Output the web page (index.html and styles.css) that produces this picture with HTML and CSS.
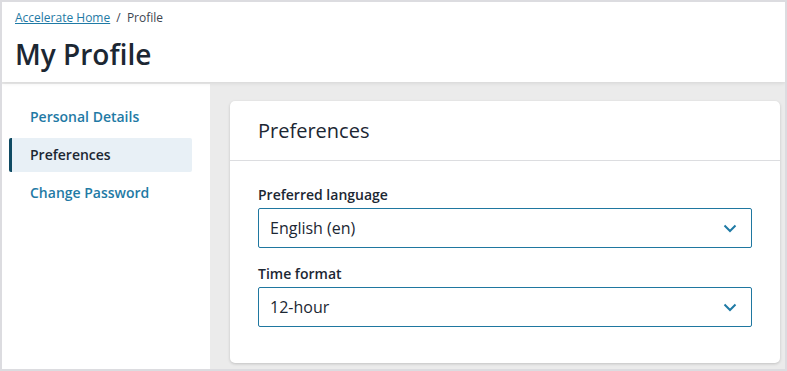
FILE: index.html
```html
<!DOCTYPE html>
<html lang="en">
<head>
<meta charset="utf-8">
<title>My Profile</title>
<link rel="stylesheet" href="styles.css">
</head>
<body>
<div class="frame">
  <header class="page-header">
    <nav class="breadcrumb">
      <a href="#" class="crumb-link">Accelerate Home</a>
      <span class="crumb-sep">/</span>
      <span class="crumb-current">Profile</span>
    </nav>
    <h1 class="page-title">My Profile</h1>
  </header>
  <div class="layout">
    <aside class="sidebar">
      <a href="#" class="side-item">Personal Details</a>
      <a href="#" class="side-item is-active">Preferences</a>
      <a href="#" class="side-item">Change Password</a>
    </aside>
    <main class="main">
      <section class="card">
        <div class="card-header">
          <h2 class="card-title">Preferences</h2>
        </div>
        <div class="card-body">
          <div class="field">
            <label class="field-label">Preferred language</label>
            <div class="select">
              <span class="select-value">English (en)</span>
              <svg class="chevron" width="14" height="9" viewBox="0 0 14 9"><path d="M1.5 1.5 L7 7 L12.5 1.5" fill="none" stroke="#1f7aa5" stroke-width="2"/></svg>
            </div>
          </div>
          <div class="field">
            <label class="field-label">Time format</label>
            <div class="select">
              <span class="select-value">12-hour</span>
              <svg class="chevron" width="14" height="9" viewBox="0 0 14 9"><path d="M1.5 1.5 L7 7 L12.5 1.5" fill="none" stroke="#1f7aa5" stroke-width="2"/></svg>
            </div>
          </div>
        </div>
      </section>
    </main>
  </div>
</div>
</body>
</html>
```

FILE: styles.css
```css
* { box-sizing: border-box; }
html, body { margin: 0; padding: 0; }
body {
  font-family: "Open Sans", "Noto Sans", sans-serif;
  color: #1c2733;
  background: #fff;
}
.frame {
  width: 787px;
  height: 371px;
  border: 2px solid #dcdce0;
  display: flex;
  flex-direction: column;
  overflow: hidden;
  background: #ebebeb;
}
.page-header {
  background: #fff;
  height: 80px;
  padding: 7px 13px 0;
  position: relative;
  z-index: 1;
  box-shadow: 0 1px 4px rgba(0,0,0,0.10);
  flex: none;
}
.breadcrumb {
  font-size: 12px;
  line-height: 17px;
  color: #3d4550;
}
.crumb-link {
  color: #1f7aa5;
  text-decoration: underline;
}
.crumb-sep { margin: 0 3px; }
.page-title {
  margin: 10px 0 0;
  font-size: 28px;
  font-weight: 600;
  line-height: 36px;
  color: #1c2733;
}
.layout {
  flex: 1;
  display: flex;
  margin-top: 2px;
  min-height: 0;
}
.sidebar {
  width: 208px;
  background: #fff;
  padding: 16px 18px 0 7px;
  display: flex;
  flex-direction: column;
  gap: 4px;
  flex: none;
}
.side-item {
  display: block;
  height: 34px;
  line-height: 34px;
  padding-left: 18px;
  font-size: 14px;
  font-weight: 600;
  color: #1f7aa5;
  text-decoration: none;
  border-left: 3px solid transparent;
  border-radius: 2px;
}
.side-item.is-active {
  background: #e8f0f6;
  border-left-color: #0f4a63;
  color: #1c2733;
}
.main {
  flex: 1;
  padding: 17px 5px 0 20px;
}
.card {
  background: #fff;
  border-radius: 5px;
  box-shadow: 0 1px 3px rgba(0,0,0,0.18);
  height: 262px;
}
.card-header {
  height: 60px;
  border-bottom: 1px solid #dcdde0;
  padding: 0 28px;
  display: flex;
  align-items: center;
}
.card-title {
  margin: 0;
  font-size: 20px;
  font-weight: 400;
  color: #1c2733;
}
.card-body {
  padding: 24px 28px 0 28px;
  display: flex;
  flex-direction: column;
  gap: 16px;
}
.field { display: flex; flex-direction: column; }
.field-label {
  font-size: 14px;
  font-weight: 600;
  line-height: 20px;
  margin-bottom: 3px;
  color: #1c2733;
}
.select {
  height: 40px;
  border: 1px solid #1f77a0;
  border-radius: 2px;
  display: flex;
  align-items: center;
  justify-content: space-between;
  padding: 0 8px 0 11px;
}
.select-value {
  font-size: 16px;
  color: #1c2733;
}
.chevron { display: block; margin-right: 6px; }
```
